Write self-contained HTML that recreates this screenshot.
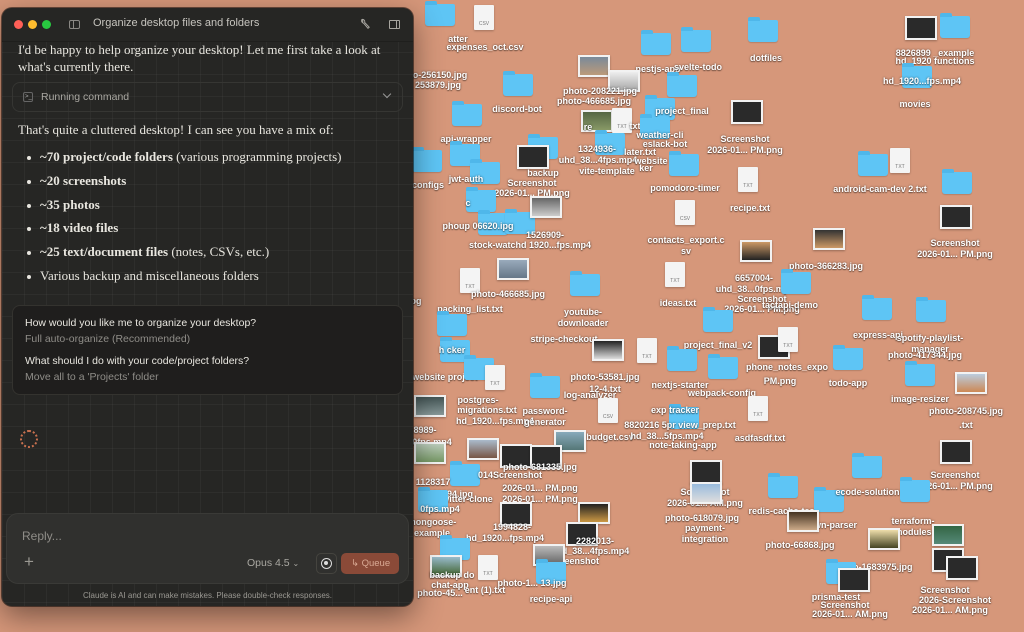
<!DOCTYPE html>
<html><head><meta charset="utf-8">
<style>
*{box-sizing:border-box;margin:0;padding:0}
body{width:1024px;height:632px;overflow:hidden;background:#d6977a;position:relative;font-family:"Liberation Sans",sans-serif}
.f{position:absolute;width:30px;height:22px;background:#5ec5f5;border-radius:2px 2px 3px 3px;box-shadow:0 1px 1px rgba(0,0,0,.15)}
.f:before{content:"";position:absolute;left:0;top:-3px;width:12px;height:4px;background:#4fb7ea;border-radius:2px 2px 0 0}
.t{position:absolute;width:20px;height:25px;background:#f4f4f4;border-radius:1px;box-shadow:0 1px 2px rgba(0,0,0,.25);font-size:5px;color:#777;text-align:center;padding-top:16px}
.s{position:absolute;width:32px;height:24px;background:#2a2a2a;border:2px solid #f2f2f2;box-shadow:0 1px 2px rgba(0,0,0,.3)}
.p{position:absolute;width:32px;height:22px;border:2px solid #f2f2f2;box-shadow:0 1px 2px rgba(0,0,0,.3)}
.l{position:absolute;color:#fff;font-size:9px;font-weight:bold;text-shadow:0 0 2px rgba(0,0,0,.55),0 1px 1px rgba(0,0,0,.4);white-space:nowrap;transform:translateX(-50%);text-align:center;line-height:11px}
#win{position:absolute;left:2px;top:8px;width:411px;height:598px;border-radius:10px;background-color:#262624;
background-image:linear-gradient(rgba(255,255,255,.035) 1px,transparent 1px),linear-gradient(90deg,rgba(255,255,255,.035) 1px,transparent 1px);background-size:22px 22px;
box-shadow:0 10px 30px rgba(0,0,0,.45),0 0 0 1px rgba(0,0,0,.5);overflow:hidden;color:#e8e6df}
.tb{position:absolute;left:0;top:0;width:100%;height:34px;background:#262624;border-bottom:1px solid #1f1f1d}
.dot{position:absolute;top:12px;width:9px;height:9px;border-radius:50%}
.serif{font-family:"Liberation Serif",serif;font-size:13px}
.box{position:absolute;left:10px;width:391px;border:1px solid #363633;border-radius:8px}
li{list-style:none;position:absolute;left:38px}
li:before{content:"";position:absolute;left:-13px;top:7px;width:4px;height:4px;border-radius:50%;background:#e8e6df}
</style></head><body>

<!-- desktop items -->
<div class="f" style="left:425px;top:4px"></div>
<div class="t" style="left:474px;top:5px">CSV</div>
<div class="l" style="left:458px;top:34px">atter</div>
<div class="l" style="left:485px;top:42px">expenses_oct.csv</div>
<div class="l" style="left:440px;top:70px">o-256150.jpg</div>
<div class="l" style="left:438px;top:80px">253879.jpg</div>
<div class="f" style="left:641px;top:33px"></div><div class="l" style="left:658px;top:64px">nestjs-app</div>
<div class="f" style="left:681px;top:30px"></div><div class="l" style="left:698px;top:62px">svelte-todo</div>
<div class="f" style="left:748px;top:20px"></div><div class="l" style="left:766px;top:53px">dotfiles</div>
<div class="s" style="left:905px;top:16px"></div><div class="f" style="left:940px;top:16px"></div>
<div class="l" style="left:935px;top:48px">8826899 _example</div>
<div class="l" style="left:935px;top:56px">hd_1920 functions</div>
<div class="f" style="left:902px;top:66px"></div><div class="l" style="left:922px;top:76px">hd_1920...fps.mp4</div>
<div class="l" style="left:915px;top:99px">movies</div>
<div class="p" style="left:578px;top:55px;background:linear-gradient(#7a8a9a,#bb9a7a)"></div>
<div class="p" style="left:608px;top:70px;background:linear-gradient(#eee,#aaa)"></div>
<div class="l" style="left:600px;top:86px">photo-208221.jpg</div>
<div class="l" style="left:594px;top:96px">photo-466685.jpg</div>
<div class="f" style="left:503px;top:74px"></div><div class="l" style="left:517px;top:104px">discord-bot</div>
<div class="f" style="left:667px;top:75px"></div><div class="f" style="left:645px;top:98px"></div><div class="l" style="left:682px;top:106px">project_final</div>
<div class="s" style="left:731px;top:100px"></div><div class="l" style="left:745px;top:134px">Screenshot<br>2026-01... PM.png</div>
<div class="f" style="left:452px;top:104px"></div><div class="l" style="left:466px;top:134px">api-wrapper</div>
<div class="p" style="left:581px;top:110px;background:linear-gradient(#556644,#889966)"></div>
<div class="t" style="left:612px;top:108px">TXT</div>
<div class="l" style="left:588px;top:122px">re</div><div class="l" style="left:635px;top:121px">txt</div>
<div class="f" style="left:640px;top:117px"></div><div class="l" style="left:660px;top:130px">weather-cli</div><div class="l" style="left:665px;top:139px">eslack-bot</div>
<div class="f" style="left:528px;top:137px"></div><div class="f" style="left:595px;top:133px"></div>
<div class="l" style="left:597px;top:144px">1324936-</div><div class="l" style="left:640px;top:147px">later.txt</div>
<div class="s" style="left:517px;top:145px"></div>
<div class="l" style="left:598px;top:155px">uhd_38...4fps.mp4</div><div class="l" style="left:655px;top:156px">website n</div>
<div class="l" style="left:607px;top:166px">vite-template</div><div class="l" style="left:646px;top:163px">ker</div>
<div class="l" style="left:543px;top:168px">backup</div><div class="l" style="left:532px;top:178px">Screenshot</div><div class="l" style="left:532px;top:188px">2026-01... PM.png</div>
<div class="f" style="left:450px;top:144px"></div><div class="f" style="left:470px;top:162px"></div><div class="l" style="left:466px;top:174px">jwt-auth</div>
<div class="f" style="left:412px;top:150px"></div><div class="l" style="left:428px;top:180px">configs</div>
<div class="f" style="left:669px;top:154px"></div><div class="l" style="left:685px;top:183px">pomodoro-timer</div>
<div class="t" style="left:738px;top:167px">TXT</div><div class="l" style="left:750px;top:203px">recipe.txt</div>
<div class="f" style="left:858px;top:154px"></div><div class="t" style="left:890px;top:148px">TXT</div>
<div class="l" style="left:880px;top:184px">android-cam-dev 2.txt</div>
<div class="f" style="left:942px;top:172px"></div><div class="l" style="left:956px;top:203px">no... n-</div>
<div class="s" style="left:940px;top:205px"></div><div class="l" style="left:955px;top:238px">Screenshot<br>2026-01... PM.png</div>
<div class="f" style="left:466px;top:190px"></div><div class="f" style="left:478px;top:213px"></div><div class="f" style="left:505px;top:212px"></div>
<div class="l" style="left:468px;top:198px">c</div><div class="l" style="left:478px;top:221px">phoup 06620.ipg</div>
<div class="p" style="left:530px;top:196px;background:linear-gradient(#666,#ccc)"></div>
<div class="l" style="left:545px;top:230px">1526909-</div><div class="l" style="left:530px;top:240px">stock-watchd 1920...fps.mp4</div>
<div class="t" style="left:675px;top:200px">CSV</div><div class="l" style="left:686px;top:235px">contacts_export.c<br>sv</div>
<div class="p" style="left:813px;top:228px;background:linear-gradient(#333,#c96)"></div>
<div class="p" style="left:740px;top:240px;background:linear-gradient(#c96,#222)"></div>
<div class="l" style="left:826px;top:261px">photo-366283.jpg</div>
<div class="l" style="left:754px;top:273px">6657004-</div><div class="l" style="left:755px;top:284px">uhd_38...0fps.mp4</div>
<div class="l" style="left:762px;top:294px">Screenshot</div><div class="l" style="left:762px;top:304px">2026-01... PM.png</div>
<div class="p" style="left:497px;top:258px;background:linear-gradient(#9ab,#678)"></div>
<div class="t" style="left:665px;top:262px">TXT</div><div class="l" style="left:678px;top:298px">ideas.txt</div>
<div class="t" style="left:460px;top:268px">TXT</div><div class="l" style="left:508px;top:289px">photo-466685.jpg</div>
<div class="l" style="left:470px;top:304px">packing_list.txt</div>
<div class="f" style="left:570px;top:274px"></div><div class="l" style="left:583px;top:307px">youtube-<br>downloader</div>
<div class="f" style="left:781px;top:272px"></div><div class="l" style="left:790px;top:300px">tactapi-demo</div>
<div class="l" style="left:416px;top:296px">og</div>
<div class="f" style="left:437px;top:314px"></div>
<div class="l" style="left:564px;top:334px">stripe-checkout</div>
<div class="f" style="left:703px;top:310px"></div><div class="l" style="left:718px;top:340px">project_final_v2</div>
<div class="f" style="left:862px;top:298px"></div><div class="l" style="left:878px;top:330px">express-api</div>
<div class="f" style="left:916px;top:300px"></div><div class="l" style="left:930px;top:333px">spotify-playlist-<br>manager</div>
<div class="l" style="left:925px;top:350px">photo-417344.jpg</div>
<div class="s" style="left:758px;top:335px"></div><div class="t" style="left:778px;top:327px">TXT</div>
<div class="l" style="left:787px;top:362px">phone_notes_expo</div><div class="l" style="left:780px;top:376px">PM.png</div>
<div class="f" style="left:833px;top:348px"></div><div class="l" style="left:848px;top:378px">todo-app</div>
<div class="f" style="left:440px;top:340px"></div><div class="l" style="left:452px;top:345px">h cker</div>
<div class="l" style="left:445px;top:372px">website project</div>
<div class="f" style="left:464px;top:358px"></div>
<div class="t" style="left:485px;top:365px">TXT</div>
<div class="l" style="left:478px;top:395px">postgres-</div><div class="l" style="left:487px;top:405px">migrations.txt</div><div class="l" style="left:495px;top:416px">hd_1920...fps.mp4</div>
<div class="f" style="left:530px;top:376px"></div><div class="l" style="left:545px;top:406px">password-<br>generator</div>
<div class="p" style="left:592px;top:339px;background:linear-gradient(#222,#ddd)"></div>
<div class="t" style="left:637px;top:338px">TXT</div>
<div class="l" style="left:605px;top:372px">photo-53581.jpg</div><div class="l" style="left:605px;top:384px">12-4.txt</div>
<div class="l" style="left:590px;top:390px">log-analyzer</div>
<div class="f" style="left:667px;top:349px"></div><div class="l" style="left:680px;top:380px">nextjs-starter</div>
<div class="f" style="left:708px;top:357px"></div><div class="l" style="left:722px;top:388px">webpack-config</div>
<div class="t" style="left:598px;top:398px">CSV</div><div class="l" style="left:610px;top:432px">budget.csv</div>
<div class="f" style="left:669px;top:407px"></div><div class="l" style="left:675px;top:405px">exp tracker</div>
<div class="l" style="left:680px;top:420px">8820216 5pr view_prep.txt</div><div class="l" style="left:667px;top:431px">hd_38...5fps.mp4</div>
<div class="l" style="left:683px;top:440px">note-taking-app</div>
<div class="t" style="left:748px;top:396px">TXT</div><div class="l" style="left:760px;top:433px">asdfasdf.txt</div>
<div class="f" style="left:905px;top:364px"></div><div class="l" style="left:920px;top:394px">image-resizer</div>
<div class="p" style="left:955px;top:372px;background:linear-gradient(#bcd,#c85)"></div>
<div class="l" style="left:966px;top:406px">photo-208745.jpg</div><div class="l" style="left:966px;top:420px">.txt</div>
<div class="p" style="left:414px;top:395px;background:linear-gradient(#455,#899)"></div>
<div class="l" style="left:425px;top:425px">8989-</div><div class="l" style="left:432px;top:437px">0fps.mp4</div>
<div class="p" style="left:554px;top:430px;background:linear-gradient(#8ab,#577)"></div>
<div class="p" style="left:467px;top:438px;background:linear-gradient(#abc,#754)"></div>
<div class="s" style="left:500px;top:444px"></div><div class="s" style="left:530px;top:445px"></div>
<div class="l" style="left:540px;top:462px">photo-681335.jpg</div>
<div class="p" style="left:414px;top:442px;background:linear-gradient(#bcb,#796)"></div>
<div class="f" style="left:450px;top:464px"></div>
<div class="l" style="left:510px;top:470px">014Screenshot</div>
<div class="l" style="left:433px;top:477px">1128317</div><div class="l" style="left:450px;top:489px">160994.jpg</div>
<div class="l" style="left:540px;top:483px">2026-01... PM.png</div>
<div class="l" style="left:466px;top:494px">twitter-clone</div><div class="l" style="left:540px;top:494px">2026-01... PM.png</div>
<div class="f" style="left:418px;top:490px"></div><div class="l" style="left:440px;top:504px">0fps.mp4</div>
<div class="p" style="left:578px;top:502px;background:linear-gradient(#222,#c94)"></div>
<div class="s" style="left:500px;top:502px"></div>
<div class="l" style="left:512px;top:522px">1994828-</div><div class="l" style="left:505px;top:533px">hd_1920...fps.mp4</div>
<div class="l" style="left:432px;top:517px">mongoose-<br>example</div>
<div class="s" style="left:690px;top:460px"></div><div class="l" style="left:705px;top:487px">Screenshot</div><div class="l" style="left:705px;top:498px">2026-01... AM.png</div>
<div class="p" style="left:690px;top:482px;background:linear-gradient(#9bd,#ddd)"></div>
<div class="l" style="left:702px;top:513px">photo-618079.jpg</div><div class="l" style="left:705px;top:523px">payment-<br>integration</div>
<div class="f" style="left:768px;top:476px"></div><div class="l" style="left:783px;top:506px">redis-cache-test</div>
<div class="f" style="left:814px;top:490px"></div><div class="l" style="left:830px;top:520px">down-parser</div>
<div class="f" style="left:852px;top:456px"></div><div class="l" style="left:870px;top:487px">ecode-solutions</div>
<div class="s" style="left:940px;top:440px"></div><div class="l" style="left:955px;top:470px">Screenshot<br>2026-01... PM.png</div>
<div class="f" style="left:900px;top:480px"></div><div class="l" style="left:913px;top:516px">terraform-<br>modules</div>
<div class="p" style="left:787px;top:510px;background:linear-gradient(#432,#ca8)"></div>
<div class="l" style="left:800px;top:540px">photo-66868.jpg</div>
<div class="p" style="left:868px;top:528px;background:linear-gradient(#eda,#442)"></div>
<div class="p" style="left:932px;top:524px;background:linear-gradient(#364,#587)"></div>
<div class="s" style="left:932px;top:548px"></div><div class="s" style="left:946px;top:556px"></div>
<div class="l" style="left:873px;top:562px">photo-1683975.jpg</div>
<div class="f" style="left:826px;top:562px"></div><div class="s" style="left:838px;top:568px"></div>
<div class="l" style="left:836px;top:592px">prisma-test</div><div class="l" style="left:845px;top:600px">Screenshot</div><div class="l" style="left:850px;top:609px">2026-01... AM.png</div>
<div class="l" style="left:945px;top:585px">Screenshot</div><div class="l" style="left:955px;top:595px">2026-Screenshot</div><div class="l" style="left:950px;top:605px">2026-01... AM.png</div>
<div class="s" style="left:566px;top:522px"></div>
<div class="l" style="left:595px;top:536px">2282013-</div><div class="l" style="left:590px;top:546px">uhd_38...4fps.mp4</div><div class="l" style="left:575px;top:556px">screenshot</div>
<div class="p" style="left:533px;top:544px;background:linear-gradient(#bbb,#666)"></div>
<div class="f" style="left:536px;top:562px"></div><div class="f" style="left:440px;top:538px"></div>
<div class="p" style="left:430px;top:555px;background:linear-gradient(#9bc,#463)"></div>
<div class="t" style="left:478px;top:555px">TXT</div>
<div class="l" style="left:452px;top:570px">backup do</div><div class="l" style="left:450px;top:580px">chat-app</div>
<div class="l" style="left:532px;top:578px">photo-1... 13.jpg</div>
<div class="l" style="left:485px;top:585px">ent (1).txt</div><div class="l" style="left:440px;top:588px">photo-45...</div>
<div class="l" style="left:551px;top:594px">recipe-api</div>
<div class="s" style="left:713px;top:458px;width:8px;height:8px;display:none"></div>

<!-- window -->
<div id="win">
 <div class="tb">
  <div class="dot" style="left:12px;background:#fe5f57"></div>
  <div class="dot" style="left:26px;background:#febc2e"></div>
  <div class="dot" style="left:40px;background:#28c840"></div>
  <div style="position:absolute;left:67px;top:12px;width:11px;height:9px;border:1px solid #8a8884;border-radius:2px"><div style="position:absolute;left:3px;top:0;width:1px;height:7px;background:#8a8884"></div></div>
  <div style="position:absolute;left:91px;top:9px;font-size:11px;color:#c6c4be">Organize desktop files and folders</div>
  <svg style="position:absolute;left:357px;top:10px" width="12" height="12" viewBox="0 0 12 12"><path d="M3 1.5a2.3 2.3 0 0 0 1.5 3.6L9 10.3l1.2-1.1L5.7 4.5A2.3 2.3 0 0 0 3 1.5l1 1.5-.6 1" fill="none" stroke="#a8a6a0" stroke-width="1"/></svg>
  <div style="position:absolute;left:387px;top:12px;width:11px;height:9px;border:1px solid #a8a6a0;border-radius:1px"><div style="position:absolute;right:2px;top:0;width:1px;height:7px;background:#a8a6a0"></div></div>
 </div>
 <div class="serif" style="position:absolute;left:16px;top:34px;line-height:16.5px">I'd be happy to help organize your desktop! Let me first take a look at<br>what's currently there.</div>
 <div class="box" style="top:74px;height:30px">
  <div style="position:absolute;left:10px;top:9px;width:10px;height:10px;border:1px solid #666;border-radius:2px;font-size:6px;color:#aaa;line-height:8px;padding-left:1px">&gt;_</div>
  <div style="position:absolute;left:28px;top:8px;font-size:10.5px;color:#a9a7a1">Running command</div>
  <div style="position:absolute;right:12px;top:8px;width:6px;height:6px;border-right:1px solid #999;border-bottom:1px solid #999;transform:rotate(45deg)"></div>
 </div>
 <div class="serif" style="position:absolute;left:16px;top:114px">That's quite a cluttered desktop! I can see you have a mix of:</div>
 <ul class="serif">
  <li style="top:141px"><b>~70 project/code folders</b> (various programming projects)</li>
  <li style="top:165px"><b>~20 screenshots</b></li>
  <li style="top:189px"><b>~35 photos</b></li>
  <li style="top:212px"><b>~18 video files</b></li>
  <li style="top:236px"><b>~25 text/document files</b> (notes, CSVs, etc.)</li>
  <li style="top:260px">Various backup and miscellaneous folders</li>
 </ul>
 <div class="box" style="top:297px;height:90px;background:#1f1e1d;border-color:#34332f">
  <div style="position:absolute;left:12px;top:11px;font-size:10.5px;color:#e8e6df">How would you like me to organize your desktop?</div>
  <div style="position:absolute;left:12px;top:27px;font-size:10.5px;color:#8f8d88">Full auto-organize (Recommended)</div>
  <div style="position:absolute;left:12px;top:49px;font-size:10.5px;color:#e8e6df">What should I do with your code/project folders?</div>
  <div style="position:absolute;left:12px;top:65px;font-size:10.5px;color:#8f8d88">Move all to a 'Projects' folder</div>
 </div>
 <div style="position:absolute;left:18px;top:422px;width:18px;height:18px;border:2px dotted #c8704f;border-radius:50%"></div>
 <div style="position:absolute;left:4px;top:505px;width:403px;height:71px;background:#30302e;border-radius:12px;border:1px solid #3a3a37">
  <div style="position:absolute;left:15px;top:15px;font-size:12px;color:#8f8d88">Reply...</div>
  <div style="position:absolute;left:17px;top:38px;font-size:17px;color:#9a9892;font-weight:300">+</div>
  <div style="position:absolute;left:240px;top:43px;font-size:10.5px;color:#a9a7a1">Opus 4.5 <span style="font-size:8px">&#8964;</span></div>
  <div style="position:absolute;left:309px;top:39px;width:21px;height:21px;border:1px solid #45443f;border-radius:5px"><div style="position:absolute;left:4px;top:4px;width:11px;height:11px;border:1.5px solid #ddd;border-radius:50%"><div style="position:absolute;left:2px;top:2px;width:4px;height:4px;background:#ddd;border-radius:50%"></div></div></div>
  <div style="position:absolute;left:334px;top:39px;width:58px;height:21px;background:#8a4a38;border-radius:5px;font-size:9.5px;color:#d9a994;line-height:21px;padding-left:10px">&#8627; Queue</div>
 </div>
 <div style="position:absolute;left:0;width:100%;top:583px;text-align:center;font-size:8px;color:#9a9892">Claude is AI and can make mistakes. Please double-check responses.</div>
</div>
</body></html>
